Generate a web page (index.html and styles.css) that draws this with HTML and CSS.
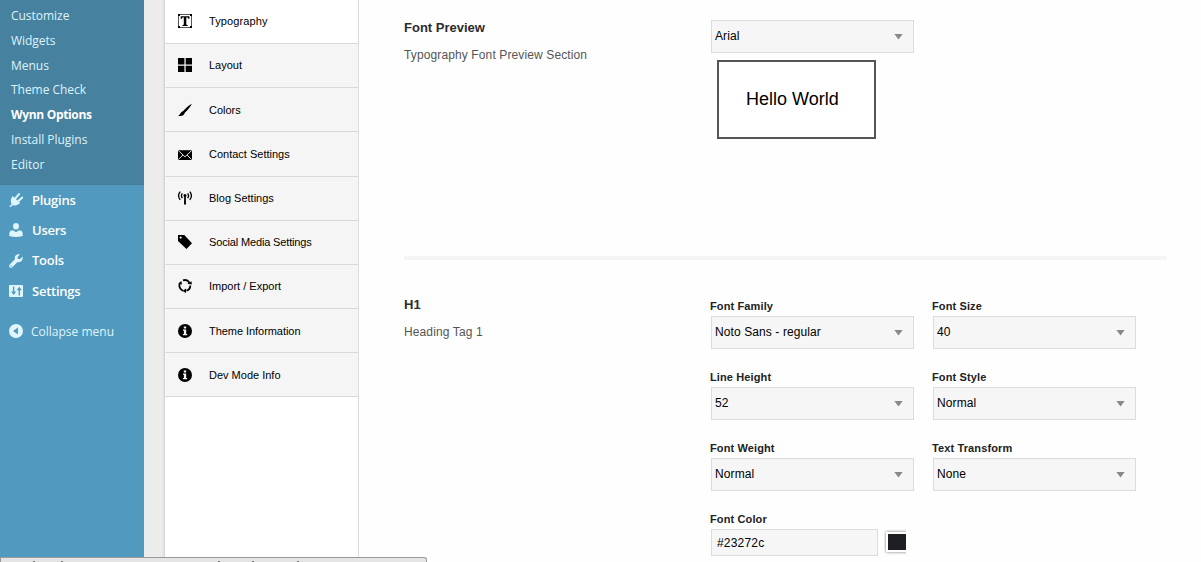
FILE: index.html
```html
<!DOCTYPE html>
<html lang="en">
<head>
<meta charset="utf-8">
<title>Wynn Options</title>
<link rel="stylesheet" href="styles.css">
</head>
<body>
<div class="page">
  <nav class="admin-menu">
    <ul class="submenu">
      <li><span>Customize</span></li><li><span>Widgets</span></li><li><span>Menus</span></li><li><span>Theme Check</span></li>
      <li class="current"><span>Wynn Options</span></li><li><span>Install Plugins</span></li><li><span>Editor</span></li>
    </ul>
    <ul class="menu">
      <li><svg viewBox="0 0 14 14"><path d="M0.3 13.7 2.6 11 C1 8 1.9 5.6 3.6 2.9 L11.2 10.1 C8.7 12.5 5.7 12.9 3.9 11.9 L1.9 13.9Z"/><path d="M6.6 5.2 10 1.1M9.5 8 13.3 4.5" stroke="currentColor" stroke-width="2" stroke-linecap="round"/></svg><span>Plugins</span></li>
      <li><svg viewBox="0 0 14 14"><ellipse cx="7" cy="3.3" rx="2.9" ry="3.2"/><path d="M.3 13V10.2Q.6 7.4 4 7.3 L7 9.2 10 7.3Q13.4 7.4 13.7 10.2V13Q7 15 .3 13Z"/></svg><span>Users</span></li>
      <li><svg viewBox="0 0 14 14"><path d="M13.5 2.6 10.8 5.2 8.8 4.7 8.5 3 11 .5C8.7-.4 6.2.9 5.8 3.3 5.7 4 5.8 4.7 6 5.3L.7 10.6C-.9 12.4 1.3 14.9 3.3 13.2L8.5 7.9C11.6 9 14.6 6 13.5 2.6ZM1.4 11.9A.7.7 0 1 1 2.8 11.9A.7.7 0 1 1 1.4 11.9Z" fill-rule="evenodd"/></svg><span>Tools</span></li>
      <li><svg viewBox="0 0 14 14"><path fill-rule="evenodd" d="M1 1H13Q14 1 14 2V12Q14 13 13 13H1Q0 13 0 12V2Q0 1 1 1ZM3.9 2.6V7.5H2L4.7 11 7.2 7.5H5.3V2.6ZM9.6 11.4V6.2H7.6L10.3 2.8 12.9 6.2H11V11.4Z"/></svg><span>Settings</span></li>
    </ul>
    <div class="collapse"><svg viewBox="0 0 14 14"><path fill-rule="evenodd" d="M0 7A7 7 0 1 1 14 7A7 7 0 1 1 0 7ZM9 3.5V10.5L4 7Z"/></svg><span>Collapse menu</span></div>
  </nav>
  <div class="gutter"></div>
  <aside class="tabs">
    <ul>
      <li class="active raised"><svg viewBox="0 0 14 14"><path d="M.5.5H13.5V13.5H.5Z" fill="none" stroke="#555"/><path d="M2.7 2.2H11.4V5H10.6Q10.4 3.3 8.3 3.3V10Q8.3 11.2 9.8 11.2V12H4.3V11.2Q5.8 11.2 5.8 10V3.3Q3.7 3.3 3.5 5H2.7Z"/><path d="M0 0H2V2H0ZM12 0H14V2H12ZM0 12H2V14H0ZM12 12H14V14H12Z"/></svg><span>Typography</span></li>
      <li class="raised"><svg viewBox="0 0 14 14"><path d="M0 0H6.4V6.4H0ZM7.7 0H14V6.4H7.7ZM0 7.7H6.4V14H0ZM7.7 7.7H14V14H7.7Z"/></svg><span>Layout</span></li>
      <li><svg viewBox="0 0 14 14"><path d="M14 .8C11.2 2.3 7.6 5.1 5 8.3 2.4 8.8 2.9 11.6.2 12.5 2.2 13.6 6.1 13.3 6.8 9.8 9.5 7.2 12.3 3.9 14 .8Z"/></svg><span>Colors</span></li>
      <li><svg viewBox="0 0 14 14"><path d="M0 3.2H14V13H0Z"/><path d="M.2 3.5 5.1 8 7 9.8 8.9 8 13.8 3.5M.3 12.6 5 8M13.7 12.6 9 8" fill="none" stroke="#f5f5f5" stroke-width=".9"/></svg><span>Contact Settings</span></li>
      <li><svg viewBox="0 0 14 14"><path d="M4.4 2.3Q2.5 4.6 4.4 7.2M9.6 2.3Q11.5 4.6 9.6 7.2M2.2.7Q-1 4.6 2.2 8.9M11.8.7Q15 4.6 11.8 8.9" fill="none" stroke="#000" stroke-width="1.3"/><circle cx="7" cy="4.5" r="1.5"/><path d="M6.2 5H7.8L8 13.5H6Z"/></svg><span>Blog Settings</span></li>
      <li class="wide"><svg viewBox="0 0 14 14"><path fill-rule="evenodd" d="M0 0H6.3L14 8.2 8.5 13.9 0 6ZM1.6 2.6A1.1 1.1 0 1 0 3.8 2.6A1.1 1.1 0 1 0 1.6 2.6Z"/></svg><span>Social Media Settings</span></li>
      <li><svg viewBox="0 0 14 14"><path d="M5 1.4A5.6 5.6 0 0 1 11.5 3.7M12.3 6.4A5.5 5.5 0 0 1 8.4 11.7M5 11.7A5.5 5.5 0 0 1 1.7 4.7" fill="none" stroke="#000" stroke-width="1.8"/><path d="M9.2 4.8 13.8 5.6 13.5 2.3ZM8 9.5 4.5 11.9 8 13.9ZM.2 4.6 4 5.4 3.4 1.9Z"/></svg><span>Import / Export</span></li>
      <li class="lowered"><svg viewBox="0 0 14 14"><circle cx="7" cy="7" r="7"/><path fill="#f5f5f5" d="M5.8 2.5H8.2V4.5H5.8ZM5 5.6H8.2V10H9.2V11.3H4.9V10H5.9V6.8H5Z"/></svg><span>Theme Information</span></li>
      <li><svg viewBox="0 0 14 14"><circle cx="7" cy="7" r="7"/><path fill="#f5f5f5" d="M5.8 2.5H8.2V4.5H5.8ZM5 5.6H8.2V10H9.2V11.3H4.9V10H5.9V6.8H5Z"/></svg><span>Dev Mode Info</span></li>
    </ul>
  </aside>
  <main class="content">
    <section class="row preview">
      <div class="info"><h3>Font Preview</h3><p>Typography Font Preview Section</p></div>
      <div>
        <div class="select"><span>Arial</span><i></i></div>
        <div class="sample">Hello World</div>
      </div>
    </section>
    <section class="row heading">
      <div class="info"><h3>H1</h3><p>Heading Tag 1</p></div>
      <div class="fields">
        <div class="field"><label>Font Family</label><div class="select"><span>Noto Sans - regular</span><i></i></div></div>
        <div class="field"><label>Font Size</label><div class="select"><span>40</span><i></i></div></div>
        <div class="field"><label>Line Height</label><div class="select"><span>52</span><i></i></div></div>
        <div class="field"><label>Font Style</label><div class="select"><span>Normal</span><i></i></div></div>
        <div class="field"><label>Font Weight</label><div class="select"><span>Normal</span><i></i></div></div>
        <div class="field"><label>Text Transform</label><div class="select"><span>None</span><i></i></div></div>
        <div class="field"><label>Font Color</label><div class="color"><div class="hex">#23272c</div><div class="clip"><div class="swatch"></div></div></div></div>
      </div>
    </section>
  </main>
</div>
<div class="status"><svg viewBox="0 0 420 4"><path d="M32 3h2v1h-2zM60 3h2v1h-2zM217 3h2v1h-2zM251 3h2v1h-2zM296 3h2v1h-2z"/></svg></div>
</body>
</html>
```
FILE: styles.css
```css
* { box-sizing: border-box; }
body { margin: 0; height: 562px; overflow: hidden; background: #fefefe; font-family: "Liberation Sans", Arial, sans-serif; color: #000; }
ul { list-style: none; margin: 0; padding: 0; }
h3, p { margin: 0; }
svg { display: block; flex: none; width: 14px; height: 14px; }
.page { display: flex; height: 562px; }

.admin-menu { width: 144px; flex: none; background: #5199be; font-family: "Open Sans", sans-serif; color: #fff; white-space: nowrap; }
.submenu { height: 185px; padding: 4px 0 0 11px; background: #4681a0; box-shadow: inset 0 -1px #437b98; }
.submenu li { height: 24.83px; line-height: 24.83px; font-size: 12px; letter-spacing: -.03px; color: #dff3fb; }
.submenu .current { font-weight: 700; letter-spacing: -.33px; color: #fff; }
.menu li { display: flex; align-items: center; gap: 9px; height: 30.3px; padding-left: 9px; font-size: 13px; font-weight: 600; letter-spacing: -.25px; }
.menu { height: 121px; }
.menu li span { margin-top: -1px; }
.admin-menu svg { fill: currentColor; color: #dff6ff; }
.collapse { display: flex; align-items: center; gap: 8px; height: 30px; margin-top: 10px; padding-left: 9px; font-size: 12px; color: #e0f5fd; }

.gutter { flex: none; width: 21px; background: linear-gradient(90deg, #ececec 18px, #e6e6e6 19px, #d2d2d2 21px); }
.tabs { flex: none; width: 194px; background: #fff; border-right: 1px solid #dcdcdc; }
.tabs li { display: flex; align-items: center; gap: 17px; height: 44.13px; padding-left: 13px; background: #f5f5f5; border-bottom: 1px solid #d9d9d9; font-size: 11px; }
.tabs li.active { background: #fff; letter-spacing: .1px; }
.tabs .raised { padding-bottom: 2px; }
.tabs .lowered { padding-top: 1px; letter-spacing: -.05px; }
.tabs .wide { letter-spacing: -.15px; }

.content { flex: 1; padding-left: 45px; }
.row { display: flex; width: 763px; }
.info { width: 307px; flex: none; }
.info h3 { font-size: 13px; line-height: 18px; color: #2c2c2c; }
.info p { margin-top: 9px; font-size: 12px; line-height: 18px; letter-spacing: .12px; color: #555; }
.preview { height: 260px; padding-top: 20px; border-bottom: 4px solid #f5f5f5; }
.preview .info { margin-top: -1px; }
.select { display: flex; align-items: center; justify-content: space-between; width: 203px; height: 33px; padding: 0 10px 2px 3px; background: #f6f6f6; border: 1px solid #dcdcdc; font-size: 12px; letter-spacing: .1px; }
.select i { width: 9px; height: 6px; margin-top: 2px; background: #888; clip-path: polygon(0 0, 100% 0, 50% 100%); }
.sample { width: 159px; height: 79px; margin: 7px 0 0 6px; padding-left: 27px; border: 2px solid #555; font-size: 18px; line-height: 74px; background: #fff; }
.heading .info { padding-top: 36px; }
.fields { display: grid; grid-template-columns: 203px 203px; column-gap: 19px; grid-auto-rows: 71px; padding-top: 38px; flex: none; }
.field label { display: block; height: 18px; margin-left: -1px; font-size: 11px; line-height: 17px; font-weight: 700; letter-spacing: .12px; color: #222; }
.color { display: flex; gap: 6px; }
.hex { width: 167px; height: 27px; padding-left: 5px; line-height: 26px; border: 1px solid #dcdcdc; background: #f6f6f6; font-size: 12px; letter-spacing: .2px; }
.clip { width: 22px; height: 28px; padding: 3px 0 0 2px; overflow: hidden; }
.swatch { width: 22px; height: 20px; background: #1d1f23; border: 2px solid #fff; box-shadow: 0 0 3px #777; }

.status { position: absolute; left: 0; top: 557px; width: 427px; height: 5px; background: #e5e5e5; border: solid #999; border-width: 1px 1px 0 1px; border-top-right-radius: 3px; }
.status svg { width: 420px; height: 4px; fill: #777; }
```
